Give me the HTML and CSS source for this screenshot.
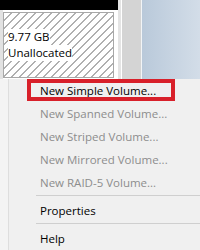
FILE: index.html
```html
<!DOCTYPE html>
<html>
<head>
<meta charset="utf-8">
<link rel="stylesheet" href="styles.css">
</head>
<body>
<div class="screen">
  <div class="top">
    <div class="disk">
      <div class="blackbar"></div>
      <div class="panel-wrap">
        <div class="panel">
          <span class="txt">9.77 GB</span>
          <span class="txt">Unallocated</span>
        </div>
      </div>
    </div>
    <div class="gutter"></div>
    <div class="strip"></div>
    <div class="sky"></div>
  </div>
  <div class="bottom">
    <div class="edge"></div>
    <div class="menu">
      <div class="item">New Simple Volume...</div>
      <div class="item off">New Spanned Volume...</div>
      <div class="item off">New Striped Volume...</div>
      <div class="item off">New Mirrored Volume...</div>
      <div class="item off">New RAID-5 Volume...</div>
      <div class="sep"></div>
      <div class="item">Properties</div>
      <div class="sep"></div>
      <div class="item">Help</div>
      <div class="mark"></div>
    </div>
  </div>
</div>
</body>
</html>
```

FILE: styles.css
```css
html, body {
  margin: 0;
  padding: 0;
}
body {
  width: 200px;
  height: 250px;
  overflow: hidden;
  background: #f0f0f0;
  font-family: "Segoe UI", "Open Sans", "Noto Sans", sans-serif;
}
.screen {
  width: 200px;
  height: 250px;
  display: flex;
  flex-direction: column;
}
.top {
  display: flex;
  height: 81px;
}
.disk {
  width: 118px;
  display: flex;
  flex-direction: column;
  background: #ffffff;
}
.blackbar {
  height: 10px;
  background: #000;
}
.panel-wrap {
  flex: 1;
  padding: 2px 0 1px 0;
  background: linear-gradient(to right, #e2e2e2 0 3px, #fff 3px);
}
.panel {
  margin-left: 3px;
  width: 111px;
  height: 66px;
  border: 1px solid #a8a8a8;
  box-sizing: border-box;
  background: repeating-linear-gradient(135deg, #ffffff 0 4.5px, #b0b0b0 4.5px 5.66px);
  padding: 16px 0 0 4px;
  display: flex;
  flex-direction: column;
  align-items: flex-start;
}
.txt {
  background: #fff;
  font-size: 11.5px;
  line-height: 16px;
  color: #000;
}
.gutter {
  width: 3px;
  background: #e4e4e4;
}
.strip {
  width: 19px;
  background: #d4d4d4;
  border-left: 1px solid #fff;
  border-right: 1px solid #f2f4f6;
}
.sky {
  flex: 1;
  background: linear-gradient(to right, #b9c9da, #d3dde8);
}
.bottom {
  flex: 1;
  display: flex;
}
.edge {
  width: 8px;
  background: #f4f4f4;
  border-right: 1px solid #dedede;
}
.menu {
  position: relative;
  flex: 1;
  background: #f0f0f0;
}
.item {
  height: 23px;
  line-height: 23px;
  padding-left: 31px;
  font-size: 11.5px;
  color: #000;
  white-space: nowrap;
}
.item.off {
  color: #8d8d8d;
}
.sep {
  height: 1px;
  margin: 1px 0 3px 27px;
  background: #cfcfcf;
}
.mark {
  position: absolute;
  left: 18px;
  top: 0;
  width: 140px;
  height: 14px;
  border: 4px solid #d8202a;
}
```
